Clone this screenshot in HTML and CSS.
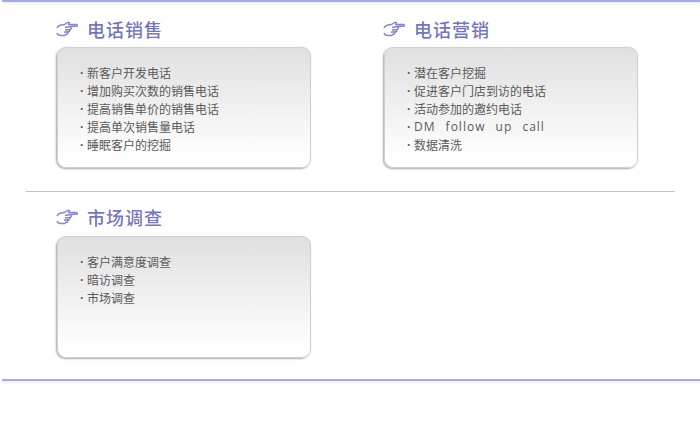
FILE: index.html
```html
<!DOCTYPE html>
<html lang="zh-CN">
<head>
<meta charset="utf-8">
<title>电话销售</title>
<link rel="stylesheet" href="styles.css">
</head>
<body>
<main class="page">
  <div class="rule"></div>
  <section class="row row-first">
    <article class="block">
      <h2 class="title"><svg class="hand" viewBox="0 0 22 16"><path d="M1 7C1.500 5.500 3 4.500 5 4L8.500 3.500L11.500 1.500L13.500 1.500L12.500 3.500L21 3.500L21.500 5L14 5.500L15.500 6.500L15 8L14 8.500L13.500 10.500L12 11L11.500 13L9.500 13.500L9 14.500L5 14.500C3 14.500 1.500 13.500 1 12M9 6.500L14 5.500M9 9L14 8.500M8 11.300L13.500 10.500"/></svg>电话销售</h2>
      <ul class="card">
        <li>新客户开发电话</li>
        <li>增加购买次数的销售电话</li>
        <li>提高销售单价的销售电话</li>
        <li>提高单次销售量电话</li>
        <li>睡眠客户的挖掘</li>
      </ul>
    </article>
    <article class="block">
      <h2 class="title"><svg class="hand" viewBox="0 0 22 16"><path d="M1 7C1.500 5.500 3 4.500 5 4L8.500 3.500L11.500 1.500L13.500 1.500L12.500 3.500L21 3.500L21.500 5L14 5.500L15.500 6.500L15 8L14 8.500L13.500 10.500L12 11L11.500 13L9.500 13.500L9 14.500L5 14.500C3 14.500 1.500 13.500 1 12M9 6.500L14 5.500M9 9L14 8.500M8 11.300L13.500 10.500"/></svg>电话营销</h2>
      <ul class="card">
        <li>潜在客户挖掘</li>
        <li>促进客户门店到访的电话</li>
        <li>活动参加的邀约电话</li>
        <li class="latin">DM follow up call</li>
        <li>数据清洗</li>
      </ul>
    </article>
  </section>
  <div class="divider"></div>
  <section class="row row-second">
    <article class="block">
      <h2 class="title"><svg class="hand" viewBox="0 0 22 16"><path d="M1 7C1.500 5.500 3 4.500 5 4L8.500 3.500L11.500 1.500L13.500 1.500L12.500 3.500L21 3.500L21.500 5L14 5.500L15.500 6.500L15 8L14 8.500L13.500 10.500L12 11L11.500 13L9.500 13.500L9 14.500L5 14.500C3 14.500 1.500 13.500 1 12M9 6.500L14 5.500M9 9L14 8.500M8 11.300L13.500 10.500"/></svg>市场调查</h2>
      <ul class="card">
        <li>客户满意度调查</li>
        <li>暗访调查</li>
        <li>市场调查</li>
      </ul>
    </article>
  </section>
  <div class="rule rule-bottom"></div>
</main>
</body>
</html>
```
FILE: styles.css
```css
* { box-sizing: border-box; }
html, body { margin: 0; padding: 0; background: #fff; }
body {
  width: 700px;
  height: 427px;
  overflow: hidden;
  font-family: "Noto Sans CJK SC", "Noto Sans", sans-serif;
}
.page { padding-left: 2px; }
.rule {
  height: 5px;
  background: linear-gradient(#a9aae0 0, #a9aae0 2px, #ebebfa 2px, #fff 5px);
}
.rule-bottom {
  margin-top: 21px;
}
.row {
  display: grid;
  grid-template-columns: 327px 254px;
  padding: 0 0 0 55px;
}
.row-first { padding-top: 11px; }
.divider {
  height: 1px;
  margin: 23px 25px 12px 24px;
  background: #bcbcec;
}
.title {
  display: flex;
  align-items: center;
  height: 26px;
  margin: 0 0 5px;
  font-size: 18px;
  line-height: 26px;
  font-weight: 500;
  letter-spacing: 1px;
  color: #7676b8;
}
.row-second .title { margin-bottom: 6px; }
.hand {
  width: 22px;
  height: 16px;
  margin: 0 9px 0 -1px;
  fill: none;
  stroke: #8585c8;
  stroke-width: 1.4;
  stroke-linejoin: round;
}
.card {
  width: 254px;
  height: 121px;
  margin: 0;
  padding: 16px 0 0 22px;
  list-style: none;
  border: 1px solid #cfcfcf;
  border-radius: 9px;
  background: linear-gradient(#e0e0e0, #fefefe 90%);
  box-shadow: -1px 1px 2px #a8a8a8;
}
.row-second .card { height: 122px; }
.card li {
  position: relative;
  padding-left: 7px;
  font-size: 12px;
  line-height: 18px;
  color: #5a5a5a;
}
.card li::before {
  content: "·";
  position: absolute;
  left: 0;
  top: 0;
  font-family: "Liberation Sans", sans-serif;
  font-weight: 700;
}
.card li.latin {
  padding-left: 7px;
  font-family: "Open Sans", "Noto Sans", sans-serif;
  font-size: 12px;
  letter-spacing: 1px;
  word-spacing: 6px;
}
```
